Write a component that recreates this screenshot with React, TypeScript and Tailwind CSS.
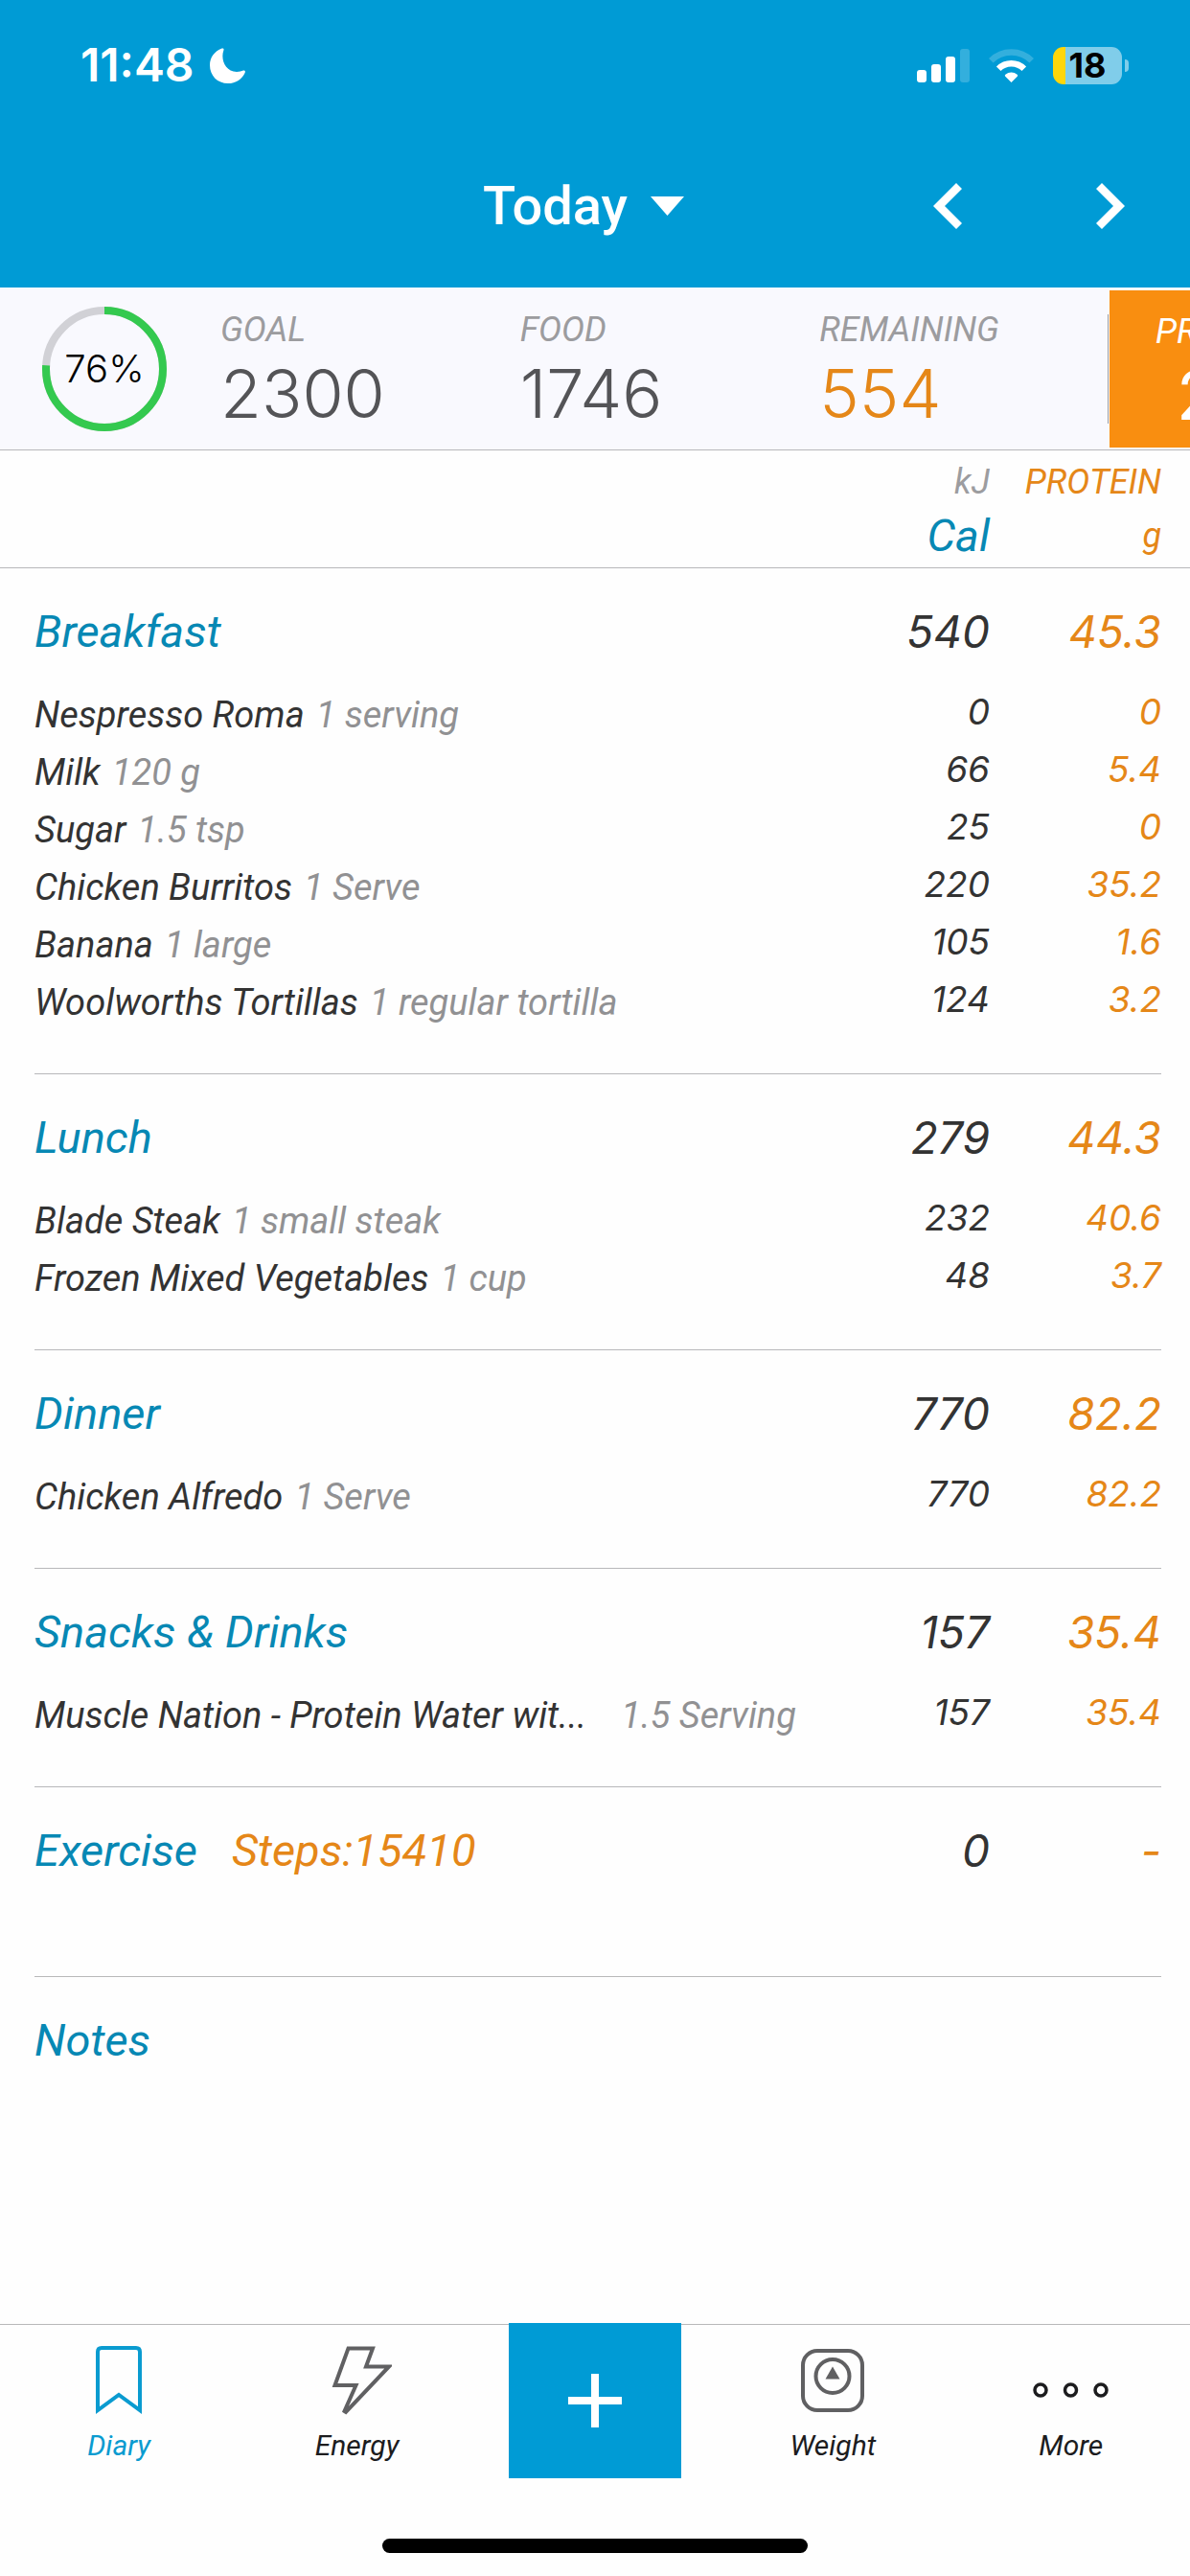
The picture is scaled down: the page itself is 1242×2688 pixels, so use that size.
import type { ReactNode } from "react";

type Food = { name: string; portion: string; cal: string; protein: string };
type Meal = { title: string; steps?: string; cal?: string; protein?: string; foods: Food[] };

const stats = [
  { label: "GOAL", value: "2300", color: "text-[#545457]" },
  { label: "FOOD", value: "1746", color: "text-[#545457]" },
  { label: "REMAINING", value: "554", color: "text-[#e58718]" },
];

const meals: Meal[] = [
  {
    title: "Breakfast",
    cal: "540",
    protein: "45.3",
    foods: [
      { name: "Nespresso Roma", portion: "1 serving", cal: "0", protein: "0" },
      { name: "Milk", portion: "120 g", cal: "66", protein: "5.4" },
      { name: "Sugar", portion: "1.5 tsp", cal: "25", protein: "0" },
      { name: "Chicken Burritos", portion: "1 Serve", cal: "220", protein: "35.2" },
      { name: "Banana", portion: "1 large", cal: "105", protein: "1.6" },
      { name: "Woolworths Tortillas", portion: "1 regular tortilla", cal: "124", protein: "3.2" },
    ],
  },
  {
    title: "Lunch",
    cal: "279",
    protein: "44.3",
    foods: [
      { name: "Blade Steak", portion: "1 small steak", cal: "232", protein: "40.6" },
      { name: "Frozen Mixed Vegetables", portion: "1 cup", cal: "48", protein: "3.7" },
    ],
  },
  {
    title: "Dinner",
    cal: "770",
    protein: "82.2",
    foods: [{ name: "Chicken Alfredo", portion: "1 Serve", cal: "770", protein: "82.2" }],
  },
  {
    title: "Snacks & Drinks",
    cal: "157",
    protein: "35.4",
    foods: [{ name: "Muscle Nation - Protein Water wit...", portion: "1.5 Serving", cal: "157", protein: "35.4" }],
  },
  { title: "Exercise", steps: "Steps:15410", cal: "0", protein: "-", foods: [] },
  { title: "Notes", foods: [] },
];

function StatusBar() {
  return (
    <div className="flex items-center justify-between pt-10 pr-16 pl-[84px] text-white">
      <div className="flex items-center gap-4">
        <span className="text-[48px] leading-[56px] font-semibold">11:48</span>
        <svg width="37" height="37" viewBox="0 0 37 37" fill="currentColor">
          <path d="M12.5.6C14 0 15 1 14.4 2.4C11 12 16 25 28 25C31 25 33 24.3 35 23.6C36.3 23.2 37.2 24.2 36.8 25.4C34 32.6 27 37 19 37C8 37 0 29 0 18C0 10 5 3.4 12.5.6Z" />
        </svg>
      </div>
      <div className="flex items-center gap-5">
        <svg width="55" height="35" viewBox="0 0 55 35" fill="currentColor">
          <rect x="0" y="22" width="10" height="13" rx="3" />
          <rect x="15" y="16" width="10" height="19" rx="3" />
          <rect x="30" y="8" width="10" height="27" rx="3" />
          <rect x="45" y="0" width="10" height="35" rx="3" opacity="0.2" />
        </svg>
        <svg width="47" height="35" viewBox="0 0 47 35" fill="none" stroke="currentColor" strokeWidth="6.5">
          <path d="M2.3 12.2A30 30 0 0 1 44.7 12.2" opacity="0.2" />
          <path d="M10.2 20.8A18.8 18.8 0 0 1 36.8 20.8" />
          <path d="M23.5 35L17 28.4Q16.4 27.4 17.4 26.7A10 10 0 0 1 29.6 26.7Q30.6 27.4 30 28.4Z" fill="currentColor" stroke="none" />
        </svg>
        <div className="flex items-center gap-[3px]">
          <div className="flex h-[39px] w-[72px] items-center justify-center rounded-[11px] bg-linear-to-r from-[#ffd60a] from-18% to-[#80cdea] to-18% text-[36px] leading-none font-bold text-black">
            18
          </div>
          <div className="h-[13px] w-1 rounded-r-full bg-[#80cdea]" />
        </div>
      </div>
    </div>
  );
}

function Header() {
  return (
    <header className="bg-[#009bd5] text-white">
      <StatusBar />
      <div className="grid h-[204px] grid-cols-[1fr_auto_1fr] items-center pt-[34px]">
        <span />
        <button className="flex items-center gap-6 pr-6 font-['Roboto',sans-serif] text-[56px] leading-[72px] font-medium">
          Today
          <svg width="35" height="20" viewBox="0 0 35 20" fill="currentColor">
            <path d="M0 0H35L17.5 20Z" />
          </svg>
        </button>
        <div className="flex justify-end gap-[140px] pr-[68px]">
          <button aria-label="Previous day">
            <svg width="30" height="48" viewBox="0 0 30 48" fill="currentColor">
              <path d="M24 0L0 24L24 48L30 42L12 24L30 6Z" />
            </svg>
          </button>
          <button aria-label="Next day">
            <svg width="30" height="48" viewBox="0 0 30 48" fill="currentColor">
              <path d="M6 0L30 24L6 48L0 42L18 24L0 6Z" />
            </svg>
          </button>
        </div>
      </div>
    </header>
  );
}

function ProgressRing() {
  return (
    <div className="relative size-[130px] shrink-0">
      <svg width="130" height="130" viewBox="0 0 130 130" fill="none" strokeWidth="8">
        <circle cx="65" cy="65" r="61" stroke="#d1d1d6" />
        <circle cx="65" cy="65" r="61" stroke="#34c94f" pathLength="100" strokeDasharray="76 24" transform="rotate(-90 65 65)" />
      </svg>
      <span className="absolute inset-0 flex items-center justify-center text-[40px] font-light text-black">76%</span>
    </div>
  );
}

function Summary() {
  return (
    <section className="flex h-[170px] items-center overflow-hidden border-b border-[#b8b8ba] bg-[#f9f9fe] pl-11">
      <ProgressRing />
      <div className="grid flex-1 grid-cols-[26fr_26fr_25fr] pl-14">
        {stats.map((stat) => (
          <div key={stat.label} className="pt-1.5">
            <p className="font-['Roboto',sans-serif] text-[36px] leading-[46px] text-[#9c9c9f] italic">{stat.label}</p>
            <p className={`text-[70px] leading-[88px] font-light ${stat.color}`}>{stat.value}</p>
          </div>
        ))}
      </div>
      <div className="h-[114px] w-px bg-[#9c9c9f]" />
      {/* next card peeks in from the right */}
      <div className="ml-px h-[164px] w-[84px] shrink-0 overflow-hidden bg-[#f98e10] pt-5 text-white">
        <p className="pl-12 font-['Roboto',sans-serif] text-[36px] leading-[46px] italic">PROTEIN</p>
        <p className="pl-[70px] text-[70px] leading-[88px]">207</p>
      </div>
    </section>
  );
}

function MealRows({ meal }: { meal: Meal }) {
  return (
    <tbody>
      <tr className="text-[46px] leading-[60px]">
        <th scope="rowgroup" className="pt-9 pb-[27px] pl-9 text-left font-['Roboto',sans-serif] text-[47px] font-normal text-[#0788b4]">
          {meal.title}
          {meal.steps && <span className="ml-9 text-[#e58718]">{meal.steps}</span>}
        </th>
        <td className="pt-9 pb-[27px] text-right text-[#333]">{meal.cal}</td>
        <td className="pt-9 pr-[30px] pb-[27px] text-right text-[#e58718]">{meal.protein}</td>
      </tr>
      {meal.foods.map((food) => (
        <tr key={food.name} className="h-[60px] text-[37px] leading-[54px]">
          <td className="pl-9 font-['Roboto',sans-serif] text-[38px] whitespace-nowrap text-[#333]">
            {food.name}
            <span className={`text-[#919193] ${food.name.endsWith("...") ? "ml-9" : "ml-3"}`}>{food.portion}</span>
          </td>
          <td className="pb-1.5 text-right text-[#333]">{food.cal}</td>
          <td className="pr-[30px] pb-1.5 text-right text-[#e58718]">{food.protein}</td>
        </tr>
      ))}
      {meal.title !== "Notes" && (
        <tr>
          <td colSpan={3} className={meal.foods.length ? "pt-11 pr-[30px] pl-9" : "pt-[74px] pr-[30px] pl-9"}>
            <div className="h-px bg-[#b8b8ba]" />
          </td>
        </tr>
      )}
    </tbody>
  );
}

function Diary() {
  return (
    <main className="flex-1">
      <table className="w-full table-fixed border-collapse italic">
        <colgroup>
          <col />
          <col className="w-[170px]" />
          <col className="w-[209px]" />
        </colgroup>
        <thead className="border-b border-[#b8b8ba] font-['Roboto',sans-serif]">
          <tr className="text-[36px] leading-[54px]">
            <td />
            <th className="pt-1.5 text-right font-normal text-[#9c9c9f]">kJ</th>
            <th className="pt-1.5 pr-[30px] text-right font-normal text-[#e58718]">PROTEIN</th>
          </tr>
          <tr className="leading-[58px]">
            <td />
            <th className="pb-1 text-right text-[47px] font-normal text-[#0788b4]">Cal</th>
            <th className="pr-[30px] pb-1 text-right text-[36px] font-normal text-[#e58718]">g</th>
          </tr>
        </thead>
        {meals.map((meal) => (
          <MealRows key={meal.title} meal={meal} />
        ))}
      </table>
    </main>
  );
}

function Tab({ label, active, children }: { label: string; active?: boolean; children: ReactNode }) {
  return (
    <button
      className={`flex flex-col items-center pt-5 font-['Roboto',sans-serif] text-[30px] leading-10 italic ${active ? "text-[#0a9bd0]" : "text-[#1c1c1e]"}`}
    >
      <span className="mb-2.5 flex h-[76px] items-center">{children}</span>
      {label}
    </button>
  );
}

function TabBar() {
  return (
    <nav className="grid h-[162px] grid-cols-5 border-t border-[#b8b8ba]">
      <Tab label="Diary" active>
        <svg width="48" height="72" viewBox="0 0 48 72" fill="none" stroke="currentColor" strokeWidth="4">
          <path d="M2 67V6Q2 2 6 2H42Q46 2 46 6V67L24 51Z" />
        </svg>
      </Tab>
      <Tab label="Energy">
        <svg width="72" height="72" viewBox="0 0 72 72" fill="none" stroke="#606062" strokeWidth="4">
          <path d="M26.5 2.5H52L45 21.5H69L24 69L22.5 68L34.5 41H12.5Z" />
        </svg>
      </Tab>
      <button aria-label="Add" className="-mt-0.5 flex h-[162px] w-[180px] items-center justify-center justify-self-center bg-[#009bd5]">
        <svg width="56" height="56" viewBox="0 0 56 56" stroke="#fff" strokeWidth="8">
          <path d="M28 0V56M0 28H56" />
        </svg>
      </button>
      <Tab label="Weight">
        <svg width="66" height="66" viewBox="0 0 66 66" fill="none" stroke="#606062" strokeWidth="4">
          <rect x="2" y="2" width="62" height="62" rx="15" />
          <circle cx="33" cy="28.5" r="17.5" />
          <path d="M33 18.5L40.5 31.5H25.5Z" fill="#606062" stroke="none" />
        </svg>
      </Tab>
      <Tab label="More">
        <svg width="79" height="76" viewBox="0 0 79 76" fill="none" stroke="currentColor" strokeWidth="3.5">
          <circle cx="8" cy="48" r="6" />
          <circle cx="39.5" cy="48" r="6" />
          <circle cx="71" cy="48" r="6" />
        </svg>
      </Tab>
    </nav>
  );
}

export default function App() {
  return (
    <div className="flex min-h-screen flex-col bg-[#fefefe] font-['Inter','Liberation_Sans',sans-serif]">
      <Header />
      <Summary />
      <Diary />
      <TabBar />
      <div className="mx-auto mt-[62px] mb-6 h-[15px] w-[444px] rounded-full bg-black" />
    </div>
  );
}
